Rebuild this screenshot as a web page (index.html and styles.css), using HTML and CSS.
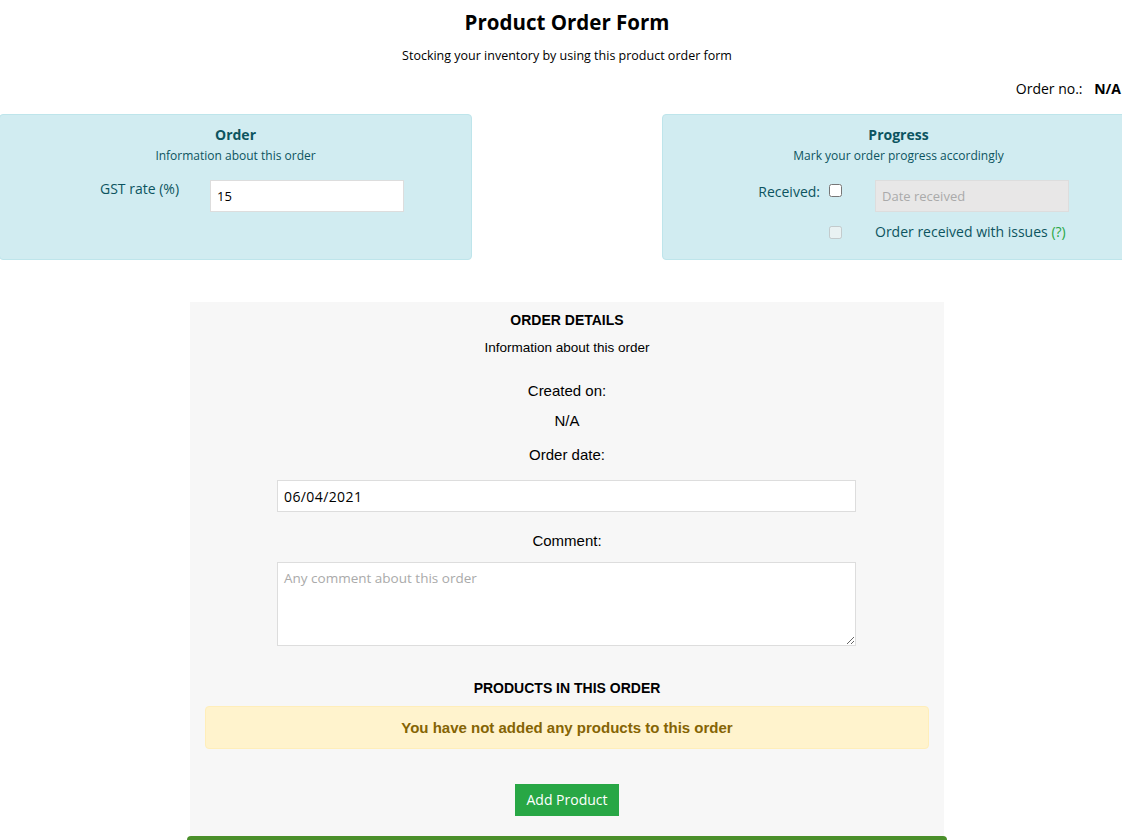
FILE: index.html
```html
<!DOCTYPE html>
<html lang="en">
<head>
  <meta charset="UTF-8" />
  <meta name="viewport" content="width=device-width, initial-scale=1.0" />
  <title>Product Order Form</title>
  <link rel="stylesheet" href="styles.css">
</head>
<body>
  <div class="page">
    <h1 class="title">Product Order Form</h1>
    <p class="subtitle">Stocking your inventory by using this product order form</p>

    <div class="order-no">Order no.: <b>N/A</b></div>

    <div class="panels">
      <div class="panel">
        <h3>Order</h3>
        <p class="panel-sub">Information about this order</p>
        <div class="gst-row">
          <label for="gst">GST rate (%)</label>
          <input type="text" id="gst" class="field" value="15" />
        </div>
      </div>

      <div class="panel">
        <h3>Progress</h3>
        <p class="panel-sub">Mark your order progress accordingly</p>
        <div class="progress-grid">
          <label for="received" class="right">Received:</label>
          <input type="checkbox" id="received" />
          <input type="text" class="field" placeholder="Date received" disabled />

          <span></span>
          <input type="checkbox" disabled />
          <span class="issues">Order received with issues <span class="help">(?)</span></span>
        </div>
      </div>
    </div>

    <div class="details">
      <h4>ORDER DETAILS</h4>
      <p class="details-sub">Information about this order</p>

      <div class="label created">Created on:</div>
      <div class="value">N/A</div>

      <div class="label order-date">Order date:</div>
      <input type="text" class="field wide" value="06/04/2021" />

      <div class="label comment">Comment:</div>
      <textarea class="field wide" placeholder="Any comment about this order"></textarea>

      <h4 class="products">PRODUCTS IN THIS ORDER</h4>
      <div class="alert">You have not added any products to this order</div>

      <button class="add-btn">Add Product</button>
    </div>
    <div class="footer-bar"></div>
  </div>
</body>
</html>
```

FILE: styles.css
```css
body {
  margin: 0;
  padding: 0;
  font-family: 'Open Sans', 'DejaVu Sans', sans-serif;
  color: #000;
  background-color: #fff;
  overflow: hidden;
}

.page {
  width: 1136px;
  margin-left: -1px;
}

.title {
  margin: 8px 0 0;
  font-size: 20.5px;
  line-height: 28px;
  text-align: center;
  font-weight: bold;
}

.subtitle {
  margin: 12px 0 0;
  font-size: 12.5px;
  line-height: 16px;
  text-align: center;
}

.order-no {
  margin-top: 15px;
  padding-right: 14px;
  font-size: 14px;
  line-height: 20px;
  text-align: right;
}

.order-no b {
  margin-left: 8px;
}

.panels {
  display: flex;
  justify-content: space-between;
  margin-top: 15px;
}

.panel {
  width: 473px;
  height: 146px;
  box-sizing: border-box;
  background-color: #d1ecf1;
  border: 1px solid #bee5eb;
  border-radius: 4px;
  color: #0c5460;
  padding-top: 10px;
}

.panel h3 {
  margin: 0;
  font-size: 14px;
  line-height: 20px;
  text-align: center;
}

.panel-sub {
  margin: 3px 0 0;
  font-size: 12px;
  line-height: 16px;
  text-align: center;
}

.field {
  box-sizing: border-box;
  height: 32px;
  border: 1px solid #ddd;
  background-color: #fff;
  font-family: 'Open Sans', 'DejaVu Sans', sans-serif;
  font-size: 13px;
  color: #000;
  padding: 0 6px;
  outline: none;
}

.field::placeholder {
  color: #aaa;
}

.field:disabled {
  background-color: #e8e7e7;
  border-color: #ddd;
}

.gst-row {
  display: flex;
  align-items: flex-start;
  margin-top: 16px;
  padding-left: 100px;
}

.gst-row label {
  width: 110px;
  font-size: 14px;
  line-height: 18px;
}

.gst-row .field {
  width: 194px;
}

.progress-grid {
  display: grid;
  grid-template-columns: 166px 46px 194px;
  grid-row-gap: 10px;
  align-items: center;
  margin-top: 16px;
}

.progress-grid .right {
  text-align: right;
  padding-right: 9px;
  font-size: 14px;
  line-height: 20px;
  margin-top: -9px;
}

.progress-grid input[type="checkbox"] {
  margin: 0;
  width: 13px;
  height: 13px;
}

.progress-grid input[type="checkbox"]:first-of-type {
  margin-top: -11px;
}

.issues {
  font-size: 14px;
  line-height: 20px;
  white-space: nowrap;
}

.help {
  color: #28a745;
}

.details {
  width: 754px;
  margin: 42px auto 0;
  background-color: #f7f7f7;
  padding: 10px 0 20px;
  text-align: center;
  font-family: 'Liberation Sans', Arial, sans-serif;
}

.details h4 {
  margin: 0;
  font-size: 14px;
  line-height: 16px;
  font-weight: bold;
}

.details-sub {
  margin: 12px 0 0;
  font-size: 13.5px;
  line-height: 16px;
}

.label, .value {
  font-size: 15px;
  line-height: 20px;
}

.created {
  margin-top: 25px;
}

.value {
  margin-top: 10px;
}

.order-date {
  margin-top: 14px;
}

.field.wide {
  display: block;
  width: 579px;
  margin: 15px 0 0 87px;
  text-align: left;
  font-size: 14px;
  letter-spacing: 0.4px;
}

.comment {
  margin-top: 19px;
}

textarea.field.wide {
  height: 84px;
  margin-top: 11px;
  padding: 6px;
  font-size: 13.5px;
  letter-spacing: 0;
  resize: vertical;
}

.details h4.products {
  margin-top: 34px;
}

.alert {
  margin: 10px 15px 0;
  height: 43px;
  box-sizing: border-box;
  background-color: #fff3cd;
  border: 1px solid #ffeeba;
  border-radius: 4px;
  color: #856404;
  font-weight: bold;
  font-size: 15px;
  line-height: 41px;
}

.add-btn {
  margin-top: 35px;
  height: 32px;
  padding: 0 11px;
  background-color: #28a745;
  border: none;
  color: #fff;
  font-family: 'Open Sans', 'DejaVu Sans', sans-serif;
  font-size: 14px;
  line-height: 30px;
  cursor: pointer;
}

.footer-bar {
  width: 760px;
  height: 8px;
  margin: 0 auto;
  background-color: #4a8f2a;
  border-radius: 4px 4px 0 0;
}
```
